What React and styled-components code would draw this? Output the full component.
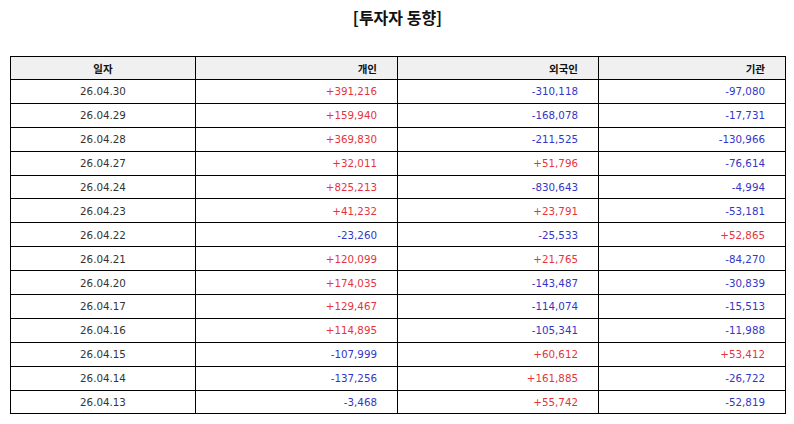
import styled, { createGlobalStyle } from "styled-components";

const GlobalStyle = createGlobalStyle`
  body {
    margin: 0;
    background: #ffffff;
    font-family: "DejaVu Sans", "Noto Sans CJK KR", sans-serif;
  }
`;

const Page = styled.div`
  width: 794px;
  height: 424px;
  padding: 6px 9px 0 10px;
  box-sizing: border-box;
`;

const Title = styled.h1`
  margin: 0 0 28px 0;
  height: 22px;
  line-height: 22px;
  text-align: center;
  font-family: "Noto Sans CJK KR", sans-serif;
  font-size: 16px;
  font-weight: 700;
  color: #111;
`;

const Table = styled.table`
  width: 775px;
  border-collapse: collapse;
  table-layout: fixed;
`;

const HeadCell = styled.th`
  height: 22px;
  padding: 0 20px;
  border: 1px solid #000;
  background: #f0f0f0;
  font-family: "Noto Sans CJK KR", sans-serif;
  font-size: 10.5px;
  font-weight: 700;
  color: #111;
  text-align: ${({ $align }) => $align || "right"};
`;

const Cell = styled.td`
  height: 22.9px;
  padding: 0 20px;
  border: 1px solid #000;
  font-size: 10.3px;
  color: ${({ $tone }) =>
    $tone === "up" ? "#e5343c" : $tone === "down" ? "#3535c8" : "#333"};
  text-align: ${({ $align }) => $align || "right"};
`;

const rows = [
  ["26.04.30", "+391,216", "-310,118", "-97,080"],
  ["26.04.29", "+159,940", "-168,078", "-17,731"],
  ["26.04.28", "+369,830", "-211,525", "-130,966"],
  ["26.04.27", "+32,011", "+51,796", "-76,614"],
  ["26.04.24", "+825,213", "-830,643", "-4,994"],
  ["26.04.23", "+41,232", "+23,791", "-53,181"],
  ["26.04.22", "-23,260", "-25,533", "+52,865"],
  ["26.04.21", "+120,099", "+21,765", "-84,270"],
  ["26.04.20", "+174,035", "-143,487", "-30,839"],
  ["26.04.17", "+129,467", "-114,074", "-15,513"],
  ["26.04.16", "+114,895", "-105,341", "-11,988"],
  ["26.04.15", "-107,999", "+60,612", "+53,412"],
  ["26.04.14", "-137,256", "+161,885", "-26,722"],
  ["26.04.13", "-3,468", "+55,742", "-52,819"],
];

const toneOf = (value) => (value.startsWith("+") ? "up" : "down");

export default function App() {
  return (
    <>
      <GlobalStyle />
      <Page>
        <Title>[투자자 동향]</Title>
        <Table>
          <colgroup>
            <col style={{ width: 185 }} />
            <col style={{ width: 202 }} />
            <col style={{ width: 201 }} />
            <col style={{ width: 187 }} />
          </colgroup>
          <thead>
            <tr>
              <HeadCell $align="center">일자</HeadCell>
              <HeadCell>개인</HeadCell>
              <HeadCell>외국인</HeadCell>
              <HeadCell>기관</HeadCell>
            </tr>
          </thead>
          <tbody>
            {rows.map(([date, ...values]) => (
              <tr key={date}>
                <Cell $align="center">{date}</Cell>
                {values.map((v, i) => (
                  <Cell key={i} $tone={toneOf(v)}>
                    {v}
                  </Cell>
                ))}
              </tr>
            ))}
          </tbody>
        </Table>
      </Page>
    </>
  );
}
